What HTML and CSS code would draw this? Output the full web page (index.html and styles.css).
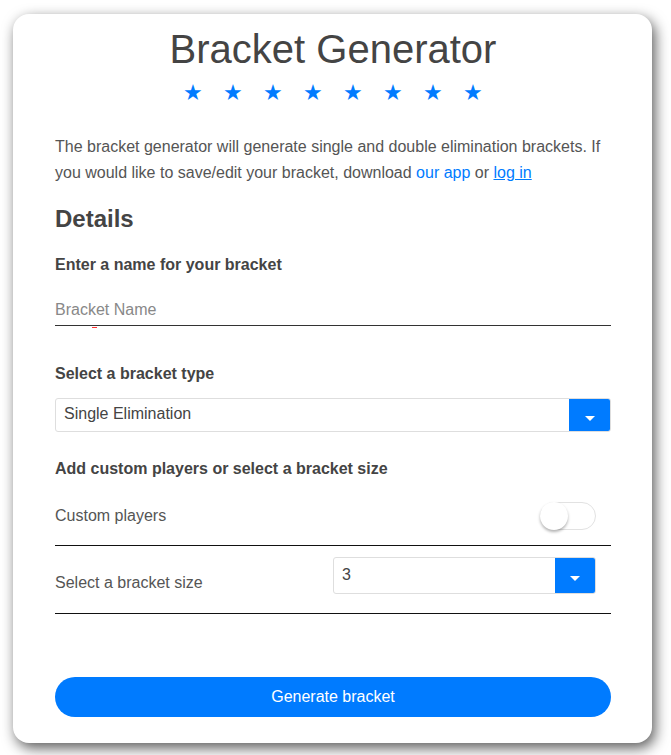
FILE: index.html
```html
<!DOCTYPE html>
<html>
<head>
<meta charset="utf-8">
<link rel="stylesheet" href="styles.css">
</head>
<body>
<div class="page">
  <div class="card">
    <h1 class="title">Bracket Generator</h1>
    <div class="stars">
      <span>★</span><span>★</span><span>★</span><span>★</span><span>★</span><span>★</span><span>★</span><span>★</span>
    </div>
    <p class="intro">The bracket generator will generate single and double elimination brackets. If you would like to save/edit your bracket, download <a class="link" href="#">our app</a> or <a class="link underline" href="#">log in</a></p>
    <h2 class="details">Details</h2>
    <div class="label">Enter a name for your bracket</div>
    <div class="name-field">
      <span class="placeholder">Bracket Name</span>
      <span class="red-mark"></span>
    </div>
    <div class="label type-label">Select a bracket type</div>
    <div class="select wide">
      <span class="select-value">Single Elimination</span>
      <span class="select-btn"><span class="caret"></span></span>
    </div>
    <div class="label custom-label">Add custom players or select a bracket size</div>
    <div class="row custom-row">
      <span class="row-text">Custom players</span>
      <span class="toggle"><span class="knob"></span></span>
    </div>
    <div class="row size-row">
      <span class="row-text size-text">Select a bracket size</span>
      <div class="select small">
        <span class="select-value top">3</span>
        <span class="select-btn"><span class="caret"></span></span>
      </div>
    </div>
    <button class="generate">Generate bracket</button>
  </div>
</div>
</body>
</html>
```
FILE: styles.css
```css
html, body {
  margin: 0;
  padding: 0;
  background: #ffffff;
}
body {
  font-family: "Liberation Sans", Arial, sans-serif;
  color: #444;
}
.page {
  padding: 14px 19px 12px 13px;
}
.card {
  width: 639px;
  height: 729px;
  box-sizing: border-box;
  background: #fff;
  border-radius: 16px;
  box-shadow: 3px 5px 14px rgba(0, 0, 0, 0.65);
  padding: 0 41px 0 42px;
  display: flex;
  flex-direction: column;
}
.title {
  margin: 12px 0 0;
  font-weight: 300;
  font-size: 40px;
  line-height: 46px;
  text-align: center;
  color: #444;
}
.stars {
  display: flex;
  justify-content: center;
  gap: 20px;
  margin-top: 8px;
  color: #007bff;
  font-size: 22px;
  line-height: 26px;
}
.stars span {
  width: 20px;
  text-align: center;
}
.intro {
  margin: 28px 0 0;
  font-size: 16px;
  line-height: 26px;
  color: #555;
}
.link {
  color: #007bff;
  text-decoration: none;
}
.underline {
  text-decoration: underline;
}
.details {
  margin: 18px 0 0;
  font-size: 24px;
  line-height: 30px;
  font-weight: bold;
  color: #444;
}
.label {
  font-size: 16px;
  font-weight: bold;
  line-height: 20px;
  color: #444;
}
.details + .label {
  margin-top: 21px;
}
.name-field {
  position: relative;
  margin-top: 22px;
  height: 29px;
  border-bottom: 1.5px solid #333;
  box-sizing: border-box;
}
.placeholder {
  display: block;
  font-size: 16px;
  line-height: 26px;
  color: #888;
}
.red-mark {
  position: absolute;
  left: 37px;
  top: 30px;
  width: 5px;
  height: 1px;
  background: #f33;
}
.type-label {
  margin-top: 38px;
}
.select {
  display: flex;
  align-items: stretch;
  border: 1px solid #dedede;
  border-radius: 3px;
  box-sizing: border-box;
  overflow: hidden;
}
.wide {
  margin-top: 14px;
  height: 34px;
}
.select-value {
  flex: 1;
  padding-left: 8px;
  font-size: 16px;
  line-height: 30px;
  color: #444;
}
.select-value.top {
  line-height: 34px;
}
.select-btn {
  width: 41px;
  background: #007bff;
  display: flex;
  align-items: center;
  justify-content: center;
}
.caret {
  width: 0;
  height: 0;
  margin-top: 6px;
  border-left: 5px solid transparent;
  border-right: 5px solid transparent;
  border-top: 5px solid #fff;
}
.custom-label {
  margin-top: 27px;
}
.row {
  display: flex;
  align-items: center;
  justify-content: space-between;
  border-bottom: 1px solid #111;
  box-sizing: border-box;
}
.custom-row {
  margin-top: 12px;
  height: 55px;
  padding-right: 15px;
  padding-bottom: 5px;
}
.row-text {
  font-size: 16px;
  color: #555;
}
.toggle {
  position: relative;
  width: 56px;
  height: 28px;
  border: 1px solid #e2e2e2;
  border-radius: 15px;
  box-sizing: border-box;
  background: #fff;
}
.knob {
  position: absolute;
  left: -1px;
  top: -1px;
  width: 28px;
  height: 28px;
  border-radius: 50%;
  background: #fff;
  box-shadow: 0 2px 3px rgba(0, 0, 0, 0.3);
}
.size-row {
  height: 68px;
  align-items: flex-start;
  padding-top: 11px;
  padding-right: 15px;
}
.size-text {
  margin-top: 17px;
}
.small {
  width: 263px;
  height: 37px;
}
.small .select-btn {
  width: 40px;
}
.generate {
  margin-top: 63px;
  height: 40px;
  border: none;
  border-radius: 20px;
  background: #007bff;
  color: #fff;
  font-family: "Liberation Sans", Arial, sans-serif;
  font-size: 16px;
  cursor: pointer;
}
```
